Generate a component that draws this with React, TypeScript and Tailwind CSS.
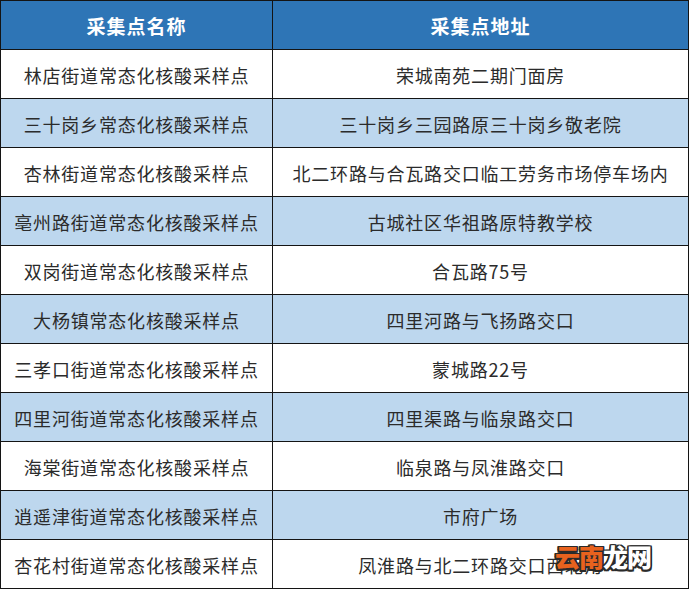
import React from "react";

const rows: [string, string][] = [
  ["林店街道常态化核酸采样点", "荣城南苑二期门面房"],
  ["三十岗乡常态化核酸采样点", "三十岗乡三园路原三十岗乡敬老院"],
  ["杏林街道常态化核酸采样点", "北二环路与合瓦路交口临工劳务市场停车场内"],
  ["亳州路街道常态化核酸采样点", "古城社区华祖路原特教学校"],
  ["双岗街道常态化核酸采样点", "合瓦路75号"],
  ["大杨镇常态化核酸采样点", "四里河路与飞扬路交口"],
  ["三孝口街道常态化核酸采样点", "蒙城路22号"],
  ["四里河街道常态化核酸采样点", "四里渠路与临泉路交口"],
  ["海棠街道常态化核酸采样点", "临泉路与凤淮路交口"],
  ["逍遥津街道常态化核酸采样点", "市府广场"],
  ["杏花村街道常态化核酸采样点", "凤淮路与北二环路交口西北角"],
];

export default function App() {
  return (
    <div className="relative w-[690px] h-[589px] bg-white overflow-hidden font-['Noto_Sans_CJK_SC','Noto_Sans',sans-serif]">
      <div className="w-[689px] border-t border-l border-r border-[#141414]">
        <div className="grid grid-cols-[272px_1fr] h-[49px] border-b border-[#141414] bg-[#2E75B6] text-white font-bold text-[19px] tracking-[1px]">
          <div className="border-r border-[#141414] flex items-center justify-center pt-[2px]">采集点名称</div>
          <div className="flex items-center justify-center pt-[2px]">采集点地址</div>
        </div>
        {rows.map((r, i) => (
          <div
            key={i}
            className={
              "grid grid-cols-[272px_1fr] h-[49px] border-b border-[#141414] text-[#2b2b2b] text-[18px] tracking-[0.8px] " +
              (i % 2 === 1 ? "bg-[#BDD7EE]" : "bg-white")
            }
          >
            <div className="border-r border-[#141414] flex items-center justify-center pt-[3px] whitespace-nowrap">{r[0]}</div>
            <div className="flex items-center justify-center pt-[3px] whitespace-nowrap">{r[1]}</div>
          </div>
        ))}
      </div>
      <div className="absolute left-[555px] top-[544px] flex text-[25px] font-black leading-none tracking-[-1px] font-['Noto_Sans_CJK_SC',sans-serif] [text-shadow:1.5px_0_0_#2a2a2a,-1.5px_0_0_#2a2a2a,0_1.5px_0_#2a2a2a,0_-1.5px_0_#2a2a2a,1.5px_1.5px_0_#2a2a2a,-1.5px_-1.5px_0_#2a2a2a,1.5px_-1.5px_0_#2a2a2a,-1.5px_1.5px_0_#2a2a2a]">
        <span className="text-[#E8621E]">云南</span>
        <span className="text-white">龙网</span>
      </div>
    </div>
  );
}
